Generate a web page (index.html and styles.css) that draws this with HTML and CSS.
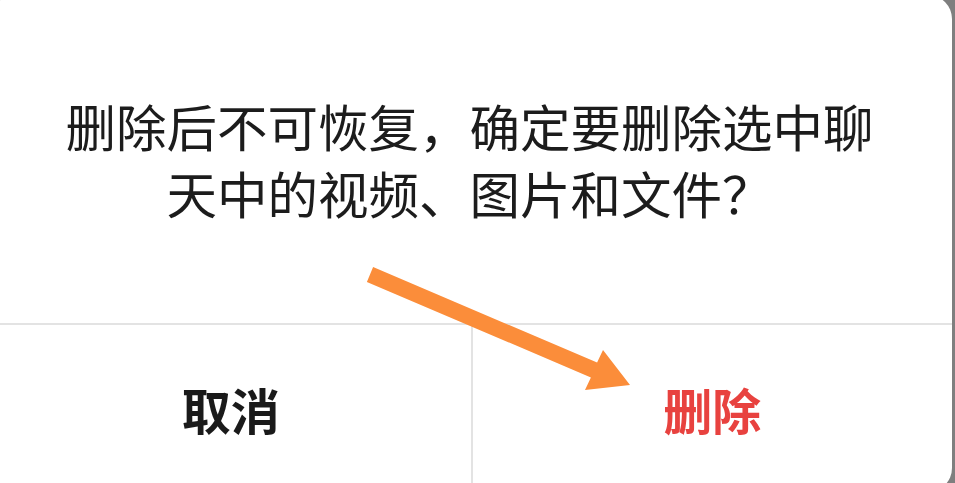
FILE: index.html
```html
<!DOCTYPE html>
<html lang="zh-CN">
<head>
<meta charset="utf-8">
<title>删除确认</title>
<link rel="stylesheet" href="styles.css">
</head>
<body>
<div class="dialog">
  <div class="message">
    <p class="message-text">删除后不可恢复，确定要删除选中聊<br>天中的视频、图片和文件？</p>
  </div>
  <div class="actions">
    <button class="btn btn-cancel" type="button">取消</button>
    <span class="vdivider"></span>
    <button class="btn btn-delete" type="button">删除</button>
  </div>
  <svg class="arrow" width="955" height="483" viewBox="0 0 955 483" aria-hidden="true">
    <polygon points="373.1,267.1 597.1,362.6 603,350 630,385 585,390 590.9,377.4 366.9,281.9" fill="#fb8d3a"/>
  </svg>
</div>
</body>
</html>
```

FILE: styles.css
```css
html, body {
  margin: 0;
  padding: 0;
}
body {
  width: 955px;
  height: 483px;
  overflow: hidden;
  background: #7f7f7f;
  font-family: "Noto Sans CJK SC", "Noto Sans", sans-serif;
}
.dialog {
  position: relative;
  width: 961px;
  height: 497px;
  margin: -5px 0 0 -9px;
  background: #ffffff;
  border-radius: 24px;
  display: flex;
  flex-direction: column;
}
.message {
  height: 328px;
  padding-right: 4px;
  display: flex;
  align-items: center;
  justify-content: center;
  border-bottom: 2px solid #e3e3e3;
}
.message-text {
  margin: 0;
  text-align: center;
  font-size: 50.5px;
  line-height: 67px;
  color: #1c1c1c;
}
.actions {
  flex: 1;
  display: flex;
}
.vdivider {
  width: 2px;
  background: #e3e3e3;
}
.btn {
  flex: 1;
  border: 0;
  padding: 0;
  margin: 0;
  background: transparent;
  font-family: "Noto Sans CJK SC", "Noto Sans", sans-serif;
  font-size: 49px;
  font-weight: 700;
  display: flex;
  align-items: center;
  justify-content: center;
}
.btn-cancel {
  color: #1a1a1a;
}
.btn-delete {
  color: #e8423f;
}
.arrow {
  position: absolute;
  left: 9px;
  top: 5px;
  pointer-events: none;
}
```
